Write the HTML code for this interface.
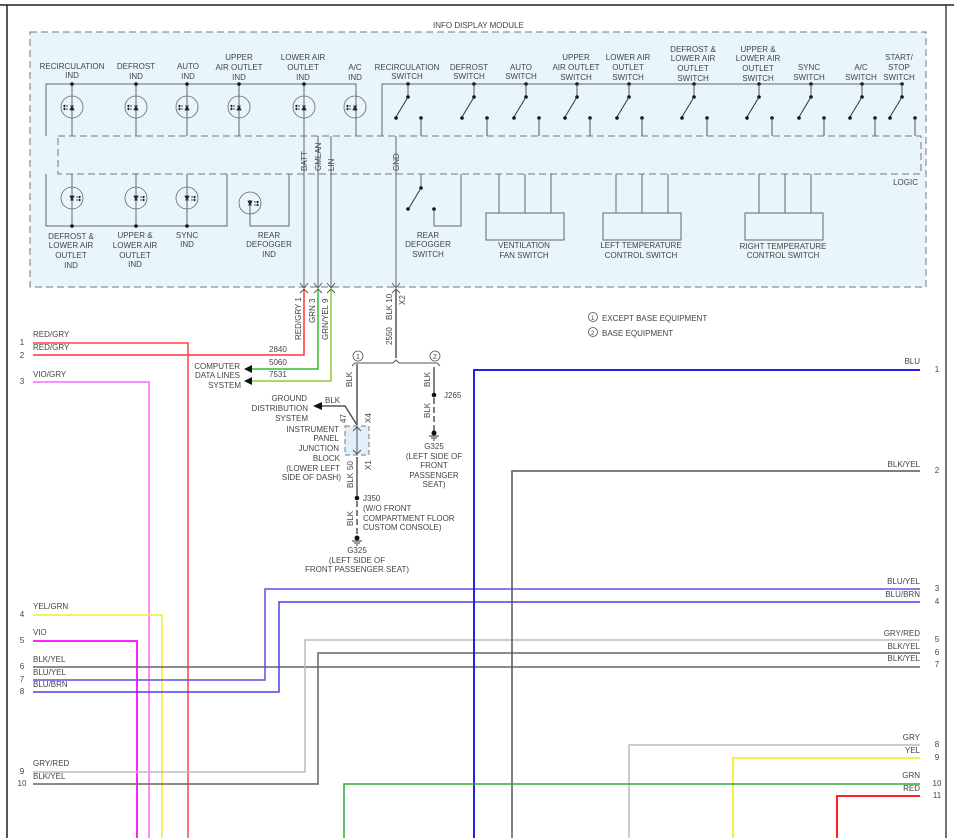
<!DOCTYPE html>
<html><head><meta charset="utf-8"><style>
html,body{margin:0;padding:0;background:#fff;}
svg{display:block;}
text{font-family:"Liberation Sans",sans-serif;font-size:8px;fill:#444;}
</style></head><body>
<svg width="954" height="838" viewBox="0 0 954 838" xmlns="http://www.w3.org/2000/svg">
<defs>
<g id="led">
<circle r="11" fill="none" stroke="#666" stroke-width="0.8"/>
<path d="M2,3 L-2,3 L0,-1 Z M-2,-1 L2,-1" fill="#222" stroke="#222" stroke-width="0.8"/>
<path d="M-9,-1 L-4,-1 M-9,2 L-4,2" stroke="#222" stroke-width="0.8"/>
<path d="M-9,-1 l2,-1.5 v3 z M-9,2 l2,-1.5 v3 z" fill="#222"/>
</g>
<g id="ledo">
<circle r="11" fill="none" stroke="#666" stroke-width="0.8"/>
<path d="M-2,-2 L2,-2 L0,2 Z M-2,2 L2,2" fill="#222" stroke="#222" stroke-width="0.8"/>
<path d="M4,-1 L9,-1 M4,2 L9,2" stroke="#222" stroke-width="0.8"/>
<path d="M9,-1 l-2,-1.5 v3 z M9,2 l-2,-1.5 v3 z" fill="#222"/>
</g>
<g id="sw">
<circle cx="0" cy="0" r="1.8" fill="#111"/>
<line x1="0" y1="0" x2="0" y2="13" stroke="#555" stroke-width="1"/>
<circle cx="0" cy="13" r="1.8" fill="#111"/>
<line x1="0" y1="13" x2="-12" y2="33" stroke="#333" stroke-width="1"/>
<circle cx="-12" cy="34" r="1.8" fill="#111"/>
<circle cx="13" cy="34" r="1.8" fill="#111"/>
<line x1="13" y1="34" x2="13" y2="52" stroke="#555" stroke-width="1"/>
</g>
</defs>
<!-- frame -->
<line x1="0" y1="5" x2="954" y2="5" stroke="#222" stroke-width="1.5"/>
<line x1="7" y1="5" x2="7" y2="838" stroke="#222" stroke-width="1.5"/>
<line x1="946" y1="5" x2="946" y2="838" stroke="#444" stroke-width="1.5"/>
<!-- module -->
<rect x="30" y="32" width="896" height="255" fill="#e8f6fc" stroke="#777" stroke-width="1" stroke-dasharray="7,4"/>
<text x="433" y="28">INFO DISPLAY MODULE</text>
<rect x="58" y="136" width="863" height="38" fill="#e8f6fc" stroke="#777" stroke-width="1" stroke-dasharray="7,4"/>
<text x="918" y="185" text-anchor="end">LOGIC</text>
<g stroke="#666" stroke-width="1" fill="none">
<path d="M46,136 V84 H356 V136"/>
<path d="M72,84 V136 M136,84 V136 M187,84 V136 M239,84 V136 M304,84 V136"/>
<path d="M382,136 V84 H902"/>
<path d="M46,174 V226 H227 V174 M72,174 V226 M136,174 V226 M187,174 V226"/>
<path d="M250,200 V226 H289 V174"/>
<path d="M421,174 V188 M434,209 V226 H461 V174"/>
<path d="M499,174 V213 M525,174 V213 M551,174 V213 M616,174 V213 M642,174 V213 M668,174 V213 M759,174 V213 M785,174 V213 M811,174 V213"/>
<rect x="486" y="213" width="78" height="27"/>
<rect x="603" y="213" width="78" height="27"/>
<rect x="745" y="213" width="78" height="27"/>
<path d="M304,136 V287 M318,136 V287 M331,136 V287 M396,136 V287"/>
</g>
<g fill="#111">
<circle cx="72" cy="84" r="1.8"/><circle cx="136" cy="84" r="1.8"/><circle cx="187" cy="84" r="1.8"/><circle cx="239" cy="84" r="1.8"/><circle cx="304" cy="84" r="1.8"/>
<circle cx="72" cy="226" r="1.8"/><circle cx="136" cy="226" r="1.8"/><circle cx="187" cy="226" r="1.8"/>
<circle cx="421" cy="188" r="1.8"/><circle cx="408" cy="209" r="1.8"/><circle cx="434" cy="209" r="1.8"/>
</g>
<line x1="421" y1="188" x2="409" y2="208" stroke="#333"/>
<use href="#led" x="72" y="107"/><use href="#led" x="136" y="107"/><use href="#led" x="187" y="107"/><use href="#led" x="239" y="107"/><use href="#led" x="304" y="107"/><use href="#led" x="355" y="107"/>
<use href="#ledo" x="72" y="198"/><use href="#ledo" x="136" y="198"/><use href="#ledo" x="187" y="198"/><use href="#ledo" x="250" y="203"/>
<use href="#sw" x="408" y="84"/><use href="#sw" x="474" y="84"/><use href="#sw" x="526" y="84"/><use href="#sw" x="577" y="84"/><use href="#sw" x="629" y="84"/><use href="#sw" x="694" y="84"/><use href="#sw" x="759" y="84"/><use href="#sw" x="811" y="84"/><use href="#sw" x="862" y="84"/><use href="#sw" x="902" y="84"/>
<g text-anchor="middle">
<text x="72" y="69">RECIRCULATION</text><text x="72" y="78">IND</text>
<text x="136" y="69">DEFROST</text><text x="136" y="79">IND</text>
<text x="188" y="69">AUTO</text><text x="188" y="79">IND</text>
<text x="239" y="60">UPPER</text><text x="239" y="70">AIR OUTLET</text><text x="239" y="80">IND</text>
<text x="303" y="60">LOWER AIR</text><text x="303" y="70">OUTLET</text><text x="303" y="80">IND</text>
<text x="355" y="70">A/C</text><text x="355" y="80">IND</text>
<text x="407" y="70">RECIRCULATION</text><text x="407" y="79">SWITCH</text>
<text x="469" y="70">DEFROST</text><text x="469" y="79">SWITCH</text>
<text x="521" y="70">AUTO</text><text x="521" y="79">SWITCH</text>
<text x="576" y="60">UPPER</text><text x="576" y="70">AIR OUTLET</text><text x="576" y="80">SWITCH</text>
<text x="628" y="60">LOWER AIR</text><text x="628" y="70">OUTLET</text><text x="628" y="80">SWITCH</text>
<text x="693" y="52">DEFROST &amp;</text><text x="693" y="61">LOWER AIR</text><text x="693" y="71">OUTLET</text><text x="693" y="81">SWITCH</text>
<text x="758" y="52">UPPER &amp;</text><text x="758" y="61">LOWER AIR</text><text x="758" y="71">OUTLET</text><text x="758" y="81">SWITCH</text>
<text x="809" y="70">SYNC</text><text x="809" y="80">SWITCH</text>
<text x="861" y="70">A/C</text><text x="861" y="80">SWITCH</text>
<text x="899" y="60">START/</text><text x="899" y="70">STOP</text><text x="899" y="80">SWITCH</text>
<text x="71" y="239">DEFROST &amp;</text><text x="71" y="248">LOWER AIR</text><text x="71" y="258">OUTLET</text><text x="71" y="268">IND</text>
<text x="135" y="238">UPPER &amp;</text><text x="135" y="248">LOWER AIR</text><text x="135" y="258">OUTLET</text><text x="135" y="267">IND</text>
<text x="187" y="238">SYNC</text><text x="187" y="247">IND</text>
<text x="269" y="238">REAR</text><text x="269" y="247">DEFOGGER</text><text x="269" y="257">IND</text>
<text x="428" y="238">REAR</text><text x="428" y="247">DEFOGGER</text><text x="428" y="257">SWITCH</text>
<text x="524" y="248">VENTILATION</text><text x="524" y="258">FAN SWITCH</text>
<text x="641" y="248">LEFT TEMPERATURE</text><text x="641" y="258">CONTROL SWITCH</text>
<text x="783" y="249">RIGHT TEMPERATURE</text><text x="783" y="258">CONTROL SWITCH</text>
</g>
<text transform="translate(307,171) rotate(-90)">BATT</text>
<text transform="translate(321,171) rotate(-90)">GMLAN</text>
<text transform="translate(334,171) rotate(-90)">LIN</text>
<text transform="translate(399,171) rotate(-90)">GND</text>
<!-- connector arrows -->
<g stroke="#555" fill="none" stroke-width="0.9">
<path d="M300,283 L304,288 L308,283 M314,283 L318,288 L322,283 M327,283 L331,288 L335,283 M392,283 L396,288 L400,283"/>
<path d="M300,293 L304,289 L308,293 M314,293 L318,289 L322,293 M327,293 L331,289 L335,293 M392,293 L396,289 L400,293"/>
</g>
<!-- wires from module -->
<path d="M304,290 V355 H33" stroke="#f33" fill="none" stroke-width="1.5"/>
<path d="M318,290 V369 H252" stroke="#3b3" fill="none" stroke-width="1.5"/>
<path d="M331,290 V381 H252" stroke="#8c3" fill="none" stroke-width="1.5"/>
<path d="M244,369 l8,-4 v8 z M244,381 l8,-4 v8 z" fill="#111"/>
<text transform="translate(301,340) rotate(-90)">RED/GRY  1</text>
<text transform="translate(315,323) rotate(-90)">GRN  3</text>
<text transform="translate(328,340) rotate(-90)">GRN/YEL  9</text>
<text x="269" y="352">2840</text><text x="269" y="365">5060</text><text x="269" y="377">7531</text>
<g text-anchor="end"><text x="240" y="369">COMPUTER</text><text x="240" y="378">DATA LINES</text><text x="241" y="388">SYSTEM</text></g>
<path d="M396,290 V358" stroke="#555" stroke-width="1.5"/>
<text transform="translate(392,320) rotate(-90)">BLK  10</text>
<text transform="translate(405,305) rotate(-90)">X2</text>
<text transform="translate(392,345) rotate(-90)">2550</text>
<path d="M352,366 L355,363 H393 L396,360 L399,363 H437 L440,366" stroke="#555" fill="none" stroke-width="1"/>
<circle cx="358" cy="356" r="5" fill="#fff" stroke="#555" stroke-width="0.8"/><text x="356" y="359" style="font-size:7px">1</text>
<circle cx="435" cy="356" r="5" fill="#fff" stroke="#555" stroke-width="0.8"/><text x="433" y="359" style="font-size:7px">2</text>
<path d="M357,364 V425" stroke="#555" stroke-width="1.5"/>
<text transform="translate(352,387) rotate(-90)">BLK</text>
<path d="M357,425 L345,406 H322" stroke="#555" fill="none" stroke-width="1.5"/>
<path d="M313,406 l9,-4 v8 z" fill="#111"/>
<text x="325" y="403">BLK</text>
<g text-anchor="end"><text x="307" y="401">GROUND</text><text x="308" y="411">DISTRIBUTION</text><text x="308" y="421">SYSTEM</text>
<text x="339" y="432">INSTRUMENT</text><text x="339" y="441">PANEL</text><text x="339" y="451">JUNCTION</text><text x="340" y="461">BLOCK</text><text x="340" y="471">(LOWER LEFT</text><text x="341" y="480">SIDE OF DASH)</text></g>
<rect x="345" y="426" width="24" height="29" fill="#e0f0fa" stroke="#777" stroke-dasharray="5,3"/>
<path d="M357,427 V454 M353,431 l4,-4 l4,4 M353,450 l4,4 l4,-4" stroke="#555" fill="none"/>
<text transform="translate(346,423) rotate(-90)">47</text>
<text transform="translate(371,423) rotate(-90)">X4</text>
<text transform="translate(353,470) rotate(-90)">50</text>
<text transform="translate(371,470) rotate(-90)">X1</text>
<path d="M357,457 V496" stroke="#555" stroke-width="1.5"/>
<text transform="translate(353,488) rotate(-90)">BLK</text>
<circle cx="357" cy="498" r="2.3" fill="#111"/>
<path d="M357,501 V536" stroke="#555" stroke-width="1.5" stroke-dasharray="6,3"/>
<text transform="translate(353,526) rotate(-90)">BLK</text>
<circle cx="357" cy="538" r="2.5" fill="#111"/><path d="M352,541 h10 M354,543 h6 M356,545 h2" stroke="#333"/>
<text x="363" y="501">J350</text><text x="363" y="511">(W/O FRONT</text><text x="363" y="521">COMPARTMENT FLOOR</text><text x="363" y="530">CUSTOM CONSOLE)</text>
<g text-anchor="middle"><text x="357" y="553">G325</text><text x="357" y="563">(LEFT SIDE OF</text><text x="357" y="572">FRONT PASSENGER SEAT)</text>
<text x="434" y="449">G325</text><text x="434" y="459">(LEFT SIDE OF</text><text x="434" y="468">FRONT</text><text x="434" y="478">PASSENGER</text><text x="434" y="487">SEAT)</text></g>
<path d="M434,367 V393" stroke="#555" stroke-width="1.5"/>
<text transform="translate(430,387) rotate(-90)">BLK</text>
<circle cx="434" cy="395" r="2.3" fill="#111"/><text x="444" y="398">J265</text>
<path d="M434,398 V431" stroke="#555" stroke-width="1.5" stroke-dasharray="6,3"/>
<text transform="translate(430,418) rotate(-90)">BLK</text>
<circle cx="434" cy="433" r="2.5" fill="#111"/><path d="M429,436 h10 M431,438 h6 M433,440 h2" stroke="#333"/>
<!-- legend -->
<circle cx="593" cy="317" r="4.5" fill="none" stroke="#555" stroke-width="0.8"/><text x="591" y="320" style="font-size:6px">1</text>
<text x="602" y="321">EXCEPT BASE EQUIPMENT</text>
<circle cx="593" cy="332" r="4.5" fill="none" stroke="#555" stroke-width="0.8"/><text x="591" y="335" style="font-size:6px">2</text>
<text x="602" y="336">BASE EQUIPMENT</text>
<!-- left wires -->
<g fill="none" stroke-width="1.5">
<path d="M33,343 H188 V838" stroke="#f44"/>
<path d="M33,382 H149 V838" stroke="#f6f"/>
<path d="M33,615 H162 V838" stroke="#ee3"/>
<path d="M33,641 H137 V838" stroke="#f2f" stroke-width="2"/>
<path d="M33,667 H920" stroke="#666"/>
<path d="M33,680 H265 V589 H920" stroke="#55d"/>
<path d="M33,692 H279 V602 H920" stroke="#44e"/>
<path d="M33,772 H305 V640 H920" stroke="#bbb"/>
<path d="M33,784 H318 V653 H920" stroke="#665"/>
<path d="M474,838 V370 H920" stroke="#22e" stroke-width="2"/>
<path d="M512,838 V471 H920" stroke="#555"/>
<path d="M629,838 V745 H920" stroke="#bbb"/>
<path d="M733,838 V758 H920" stroke="#ee0"/>
<path d="M344,838 V784 H920" stroke="#3a3"/>
<path d="M837,838 V796 H920" stroke="#f22" stroke-width="2"/>
</g>
<text x="33" y="337">RED/GRY</text><text x="33" y="350">RED/GRY</text><text x="33" y="377">VIO/GRY</text>
<text x="33" y="609">YEL/GRN</text><text x="33" y="635">VIO</text><text x="33" y="662">BLK/YEL</text><text x="33" y="675">BLU/YEL</text><text x="33" y="687">BLU/BRN</text>
<text x="33" y="766">GRY/RED</text><text x="33" y="779">BLK/YEL</text>
<g text-anchor="middle"><text x="22" y="345">1</text><text x="22" y="358">2</text><text x="22" y="384">3</text><text x="22" y="617">4</text><text x="22" y="643">5</text><text x="22" y="669">6</text><text x="22" y="682">7</text><text x="22" y="694">8</text><text x="22" y="774">9</text><text x="22" y="786">10</text>
<text x="937" y="372">1</text><text x="937" y="473">2</text><text x="937" y="591">3</text><text x="937" y="604">4</text><text x="937" y="642">5</text><text x="937" y="655">6</text><text x="937" y="667">7</text><text x="937" y="747">8</text><text x="937" y="760">9</text><text x="937" y="786">10</text><text x="937" y="798">11</text></g>
<g text-anchor="end"><text x="920" y="364">BLU</text><text x="920" y="467">BLK/YEL</text><text x="920" y="584">BLU/YEL</text><text x="920" y="597">BLU/BRN</text><text x="920" y="636">GRY/RED</text><text x="920" y="649">BLK/YEL</text><text x="920" y="661">BLK/YEL</text><text x="920" y="740">GRY</text><text x="920" y="753">YEL</text><text x="920" y="778">GRN</text><text x="920" y="791">RED</text></g>
</svg>
</body></html>
